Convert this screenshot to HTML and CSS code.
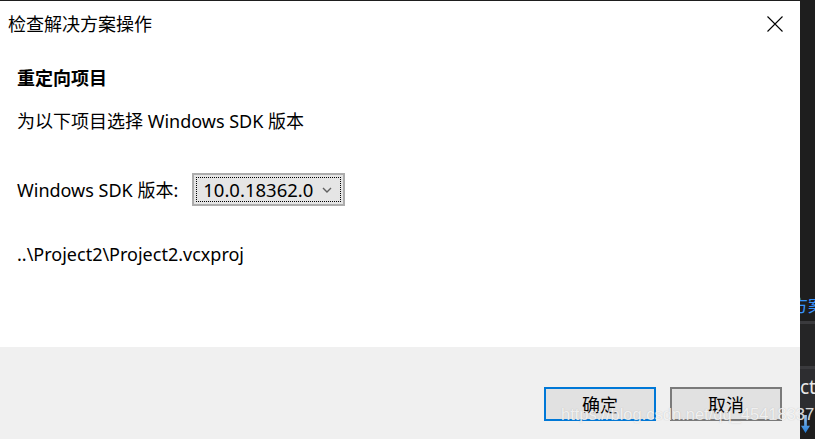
FILE: index.html
```html
<!DOCTYPE html>
<html lang="zh-CN">
<head>
<meta charset="utf-8">
<title>检查解决方案操作</title>
<link rel="stylesheet" href="styles.css">
</head>
<body>
<div class="screen">
  <div class="dialog">
    <div class="titlebar">
      <span class="title">检查解决方案操作</span>
      <svg class="close" width="16" height="16" viewBox="0 0 16 16"><path d="M0.5 0.5 L15.5 15.5 M15.5 0.5 L0.5 15.5" stroke="#000" stroke-width="1.1" fill="none"/></svg>
    </div>
    <div class="content">
      <div class="heading">重定向项目</div>
      <div class="desc">为以下项目选择 Windows SDK 版本</div>
      <div class="sdk-row">
        <span class="label">Windows SDK 版本:</span>
        <div class="select">
          <div class="select-inner">
            <span class="value">10.0.18362.0</span>
            <svg class="chev" width="10" height="6" viewBox="0 0 10 6"><path d="M1 1 L5 5 L9 1" stroke="#606060" stroke-width="1.4" fill="none"/></svg>
          </div>
        </div>
      </div>
      <div class="path">..\Project2\Project2.vcxproj</div>
    </div>
    <div class="footer">
      <button class="btn primary">确定</button>
      <button class="btn">取消</button>
    </div>
  </div>
  <div class="strip">
    <div class="strip-top"><span class="blue">方案</span></div>
    <div class="strip-line"></div>
    <div class="strip-dots"></div>
    <div class="strip-line"></div>
    <div class="strip-ct">ct</div>
    <div class="strip-icon"></div>
  </div>
  <div class="watermark">https://blog.csdn.net/qq_45418337</div>
</div>
</body>
</html>
```
FILE: styles.css
```css
* { box-sizing: border-box; }
html, body { margin: 0; padding: 0; }
body {
  width: 815px;
  height: 439px;
  overflow: hidden;
  background: #1e1e1e;
  font-family: "Noto Sans", "Noto Sans CJK SC", sans-serif;
  color: #000;
}
.screen {
  position: relative;
  display: flex;
  width: 815px;
  height: 439px;
  padding-top: 1px;
  overflow: hidden;
}
.dialog {
  width: 800px;
  height: 438px;
  background: #fff;
  display: flex;
  flex-direction: column;
}
.titlebar {
  height: 45px;
  display: flex;
  align-items: center;
  justify-content: space-between;
  padding: 0 17px 0 8px;
}
.title {
  font-family: "Noto Sans CJK SC", sans-serif;
  font-size: 18px;
  font-weight: 400;
  line-height: 24px;
  margin-top: -1px;
}
.close { display: block; }
.content {
  flex: 1;
  padding: 19px 0 0 17px;
  font-size: 18px;
  line-height: 24px;
}
.heading {
  font-family: "Noto Sans CJK SC", sans-serif;
  font-weight: 700;
  font-size: 18px;
}
.desc {
  margin-top: 20px;
  font-size: 18px;
}
.sdk-row {
  margin-top: 40px;
  display: flex;
  align-items: center;
  gap: 14px;
}
.label { font-size: 18px; }
.select {
  width: 153px;
  height: 33px;
  border: 2px solid #adadad;
  background: #e5e5e5;
  padding: 2px;
}
.select-inner {
  height: 100%;
  border: 1px dotted #000;
  display: flex;
  align-items: center;
  justify-content: space-between;
  padding: 0 8px 0 6px;
}
.value {
  font-size: 18.5px;
  line-height: 22px;
  color: #000;
}
.chev { display: block; }
.path {
  margin-top: 36px;
  font-size: 18px;
}
.footer {
  height: 92px;
  background: #f0f0f0;
  display: flex;
  justify-content: flex-end;
  align-items: flex-start;
  gap: 14px;
  padding: 40px 18px 0 0;
}
.btn {
  width: 112px;
  height: 34px;
  background: #e1e1e1;
  border: 2px solid #7a7a7a;
  font-family: "Noto Sans CJK SC", sans-serif;
  font-size: 18px;
  color: #000;
  padding: 0;
}
.btn.primary { border-color: #0078d7; }
.strip {
  width: 15px;
  height: 438px;
  background: #1e1e1e;
  overflow: hidden;
  display: flex;
  flex-direction: column;
}
.strip-top {
  height: 320px;
  padding-top: 294px;
  white-space: nowrap;
}
.blue {
  display: block;
  margin-left: -9px;
  font-family: "Noto Sans CJK SC", sans-serif;
  font-size: 17px;
  line-height: 20px;
  color: #3794ff;
}
.strip-line { height: 3px; background: #3a3a3d; }
.strip-dots {
  height: 42px;
  background: #252526;
}
.strip-ct {
  height: 40px;
  padding-top: 6px;
  font-size: 19px;
  line-height: 24px;
  color: #e8e8e8;
  background: #2d2d30;
}
.strip-icon {
  margin: 6px 0 0 1px;
  width: 9px;
  height: 18px;
  background: linear-gradient(#9cc8f0, #1e7ad6);
  clip-path: polygon(35% 0, 65% 0, 65% 60%, 100% 60%, 50% 100%, 0 60%, 35% 60%);
}
.watermark {
  position: absolute;
  left: 561px;
  top: 404px;
  font-family: "Liberation Sans", sans-serif;
  font-size: 16.5px;
  line-height: 20px;
  color: rgba(255, 255, 255, 0.8);
  text-shadow: 0 0 1px rgba(140, 140, 140, 0.5);
  white-space: nowrap;
}
```
